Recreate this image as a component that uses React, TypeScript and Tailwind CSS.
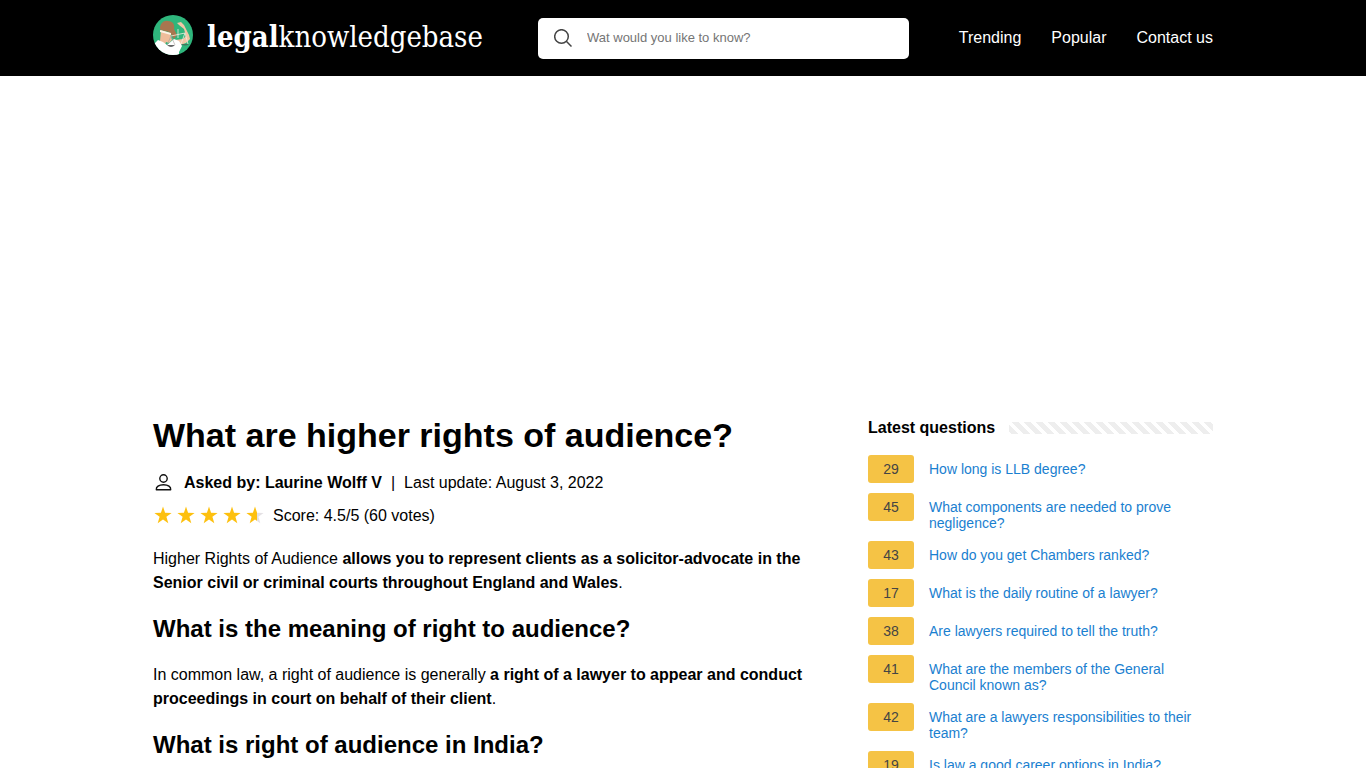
import type { ReactNode } from "react";

const navLinks = ["Trending", "Popular", "Contact us"];

const latestQuestions = [
  { count: 29, title: "How long is LLB degree?" },
  { count: 45, title: "What components are needed to prove negligence?" },
  { count: 43, title: "How do you get Chambers ranked?" },
  { count: 17, title: "What is the daily routine of a lawyer?" },
  { count: 38, title: "Are lawyers required to tell the truth?" },
  { count: 41, title: "What are the members of the General Council known as?" },
  { count: 42, title: "What are a lawyers responsibilities to their team?" },
  { count: 19, title: "Is law a good career options in India?" },
];

const STAR = "M12 .8l2.7 8.1 8.5.1-6.8 5.1 2.5 8.2-6.900-4.900-6.900 4.900 2.500-8.200L.8 9l8.500-.1z";

function LogoMark() {
  return (
    <svg viewBox="0 0 40 40" className="size-10 shrink-0" aria-hidden="true">
      <defs>
        <clipPath id="logo-circle">
          <circle cx="20" cy="20" r="20" />
        </clipPath>
      </defs>
      <g clipPath="url(#logo-circle)">
        <rect width="40" height="40" fill="#2fb67c" />
        {/* raised arm */}
        <path d="M22 25l8-1 3-3-2-7-5-4-2-2 4-1 3 3 5 10 1 4-4 4-9 3z" fill="#f3c6a6" />
        {/* head, hair and blindfold */}
        <path d="M8 15l9 3 2 7-3 3-3-1-1 3-5-4z" fill="#efbd9b" />
        <path d="M7 14C7 8 11 5 15 6c5 0 7 4 6 8l3 6-3 4-3-5-2-2-8-2z" fill="#a9764f" />
        <path d="M7 15l11 3v2L7 17z" fill="#fbf3e6" />
        <path d="M0 30l5-5 5 2 4 3 7-6 5 2 3 5-3 6 0 6H9L6 35z" fill="#fff" />
        {/* scales */}
        <path d="M25 14v9M18 21l14-3M32 18l-4 11M32 18l3 11" stroke="#f3eee0" strokeWidth=".8" fill="none" />
        <path d="M18 21l-4 9M18 21l4 9" stroke="#a8a09a" strokeWidth=".6" fill="none" />
        <path d="M14 30h8q-4 4-8 0z" fill="#666" />
        <path d="M28 29h8q-4 3-8 0z" fill="#46735e" />
      </g>
    </svg>
  );
}

function Star({ half = false }: { half?: boolean }) {
  return (
    <svg viewBox="-1 0 26 26" className="size-5" aria-hidden="true">
      {half && (
        <defs>
          <linearGradient id="half-star">
            <stop offset="60%" stopColor="#fdc00f" />
            <stop offset="60%" stopColor="#e4e1e4" />
          </linearGradient>
        </defs>
      )}
      <path d={STAR} fill={half ? "url(#half-star)" : "#fdc00f"} />
    </svg>
  );
}

function Answer({ children }: { children: ReactNode }) {
  return <p className="mb-4">{children}</p>;
}

function SubHeading({ children }: { children: ReactNode }) {
  return <h2 className="mb-4 text-2xl leading-9 font-bold">{children}</h2>;
}

function Header() {
  return (
    <header className="bg-black text-white">
      <div className="mx-auto flex h-[76px] max-w-[1060px] items-center">
        <a href="#" className="flex w-[385px] items-center gap-[14px] pb-[6px]">
          <LogoMark />
          <span className="pt-1 font-['DejaVu_Serif_Condensed','DejaVu_Serif',serif] text-[29px] leading-8 whitespace-nowrap">
            <b>legal</b>knowledgebase
          </span>
        </a>
        <form className="flex h-[41px] w-[371px] items-center rounded-[5px] bg-white pl-4">
          <svg viewBox="0 0 18 18" className="size-[18px] shrink-0" fill="none" stroke="#444" strokeWidth="1.5" aria-hidden="true">
            <circle cx="7.500" cy="7.500" r="6.800" />
            <path d="M12.300 12.300l5.200 5.200" />
          </svg>
          <input
            type="search"
            aria-label="Search"
            placeholder="Wat would you like to know?"
            className="ml-[15px] min-w-0 flex-1 text-[13px] text-black outline-none placeholder:text-[#757575]"
          />
        </form>
        <nav className="ml-auto flex gap-[30px]">
          {navLinks.map((link) => (
            <a key={link} href="#">
              {link}
            </a>
          ))}
        </nav>
      </div>
    </header>
  );
}

export default function App() {
  return (
    <div className="bg-white font-['Liberation_Sans',Arial,sans-serif] text-base leading-6 text-black">
      <Header />
      <div className="h-[336px]" />
      <div className="mx-auto flex max-w-[1060px] gap-[60px]">
        <main className="min-w-0 flex-1">
          <h1 className="mb-[13px] text-[34px] leading-[46px] font-bold">What are higher rights of audience?</h1>
          <div className="mb-[9px] flex items-center">
            <svg viewBox="0 0 20 20" className="mr-[11px] size-5" fill="none" stroke="#111" strokeWidth="1.4" aria-hidden="true">
              <circle cx="10.500" cy="5.500" r="3.700" />
              <path d="M3.300 16.700c-.3-3 2.500-5 7.200-5s7.500 2 7.200 5z" strokeLinejoin="round" />
            </svg>
            <b>Asked by: Laurine Wolff V</b>
            <span className="mx-[9px]">|</span>
            <span>Last update: August 3, 2022</span>
          </div>
          <div className="mb-[19px] flex items-center">
            <div className="mr-2 flex gap-[3px]">
              <Star />
              <Star />
              <Star />
              <Star />
              <Star half />
            </div>
            <span>Score: 4.5/5 (60 votes)</span>
          </div>
          <Answer>
            Higher Rights of Audience{" "}
            <b>allows you to represent clients as a solicitor-advocate in the Senior civil or criminal courts throughout England and Wales</b>.
          </Answer>
          <SubHeading>What is the meaning of right to audience?</SubHeading>
          <Answer>
            In common law, a right of audience is generally{" "}
            <b>a right of a lawyer to appear and conduct proceedings in court on behalf of their client</b>.
          </Answer>
          <SubHeading>What is right of audience in India?</SubHeading>
        </main>
        <aside className="w-[345px] shrink-0 pt-1">
          <div className="mb-[15px] flex items-center gap-[14px]">
            <h3 className="font-bold">Latest questions</h3>
            <div className="h-3 flex-1 bg-[linear-gradient(45deg,#fff_10%,#eee_10%_40%,#fff_40%_60%,#eee_60%_90%,#fff_90%)] bg-[length:12px_12px]" />
          </div>
          <ul className="flex flex-col gap-[10px]">
            {latestQuestions.map((question) => (
              <li key={question.title} className="flex items-start gap-[15px]">
                <span className="w-[46px] shrink-0 rounded-[3px] bg-[#f5c345] text-center text-sm leading-7 text-[#444]">{question.count}</span>
                <a href="#" className="pt-[6px] text-sm leading-4 text-[#1a80d0]">
                  {question.title}
                </a>
              </li>
            ))}
          </ul>
        </aside>
      </div>
    </div>
  );
}
